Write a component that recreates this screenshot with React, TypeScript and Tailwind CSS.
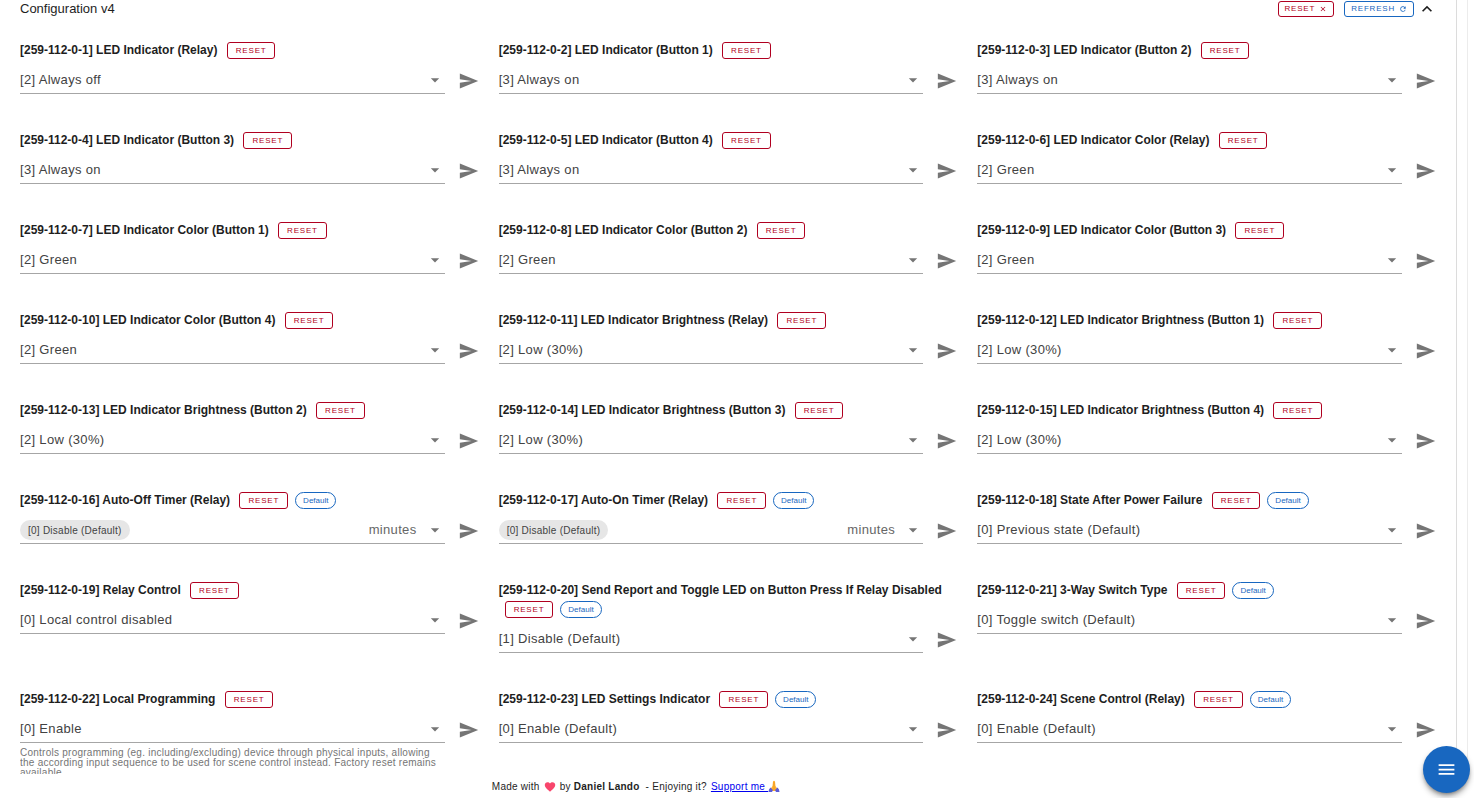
import { useState } from 'react'

interface ConfigValue {
  id: number
  label: string
  value: string
  isDefault?: boolean
  unit?: string
  description?: string
}

const configValues: ConfigValue[] = [
  { id: 1, label: 'LED Indicator (Relay)', value: '[2] Always off' },
  { id: 2, label: 'LED Indicator (Button 1)', value: '[3] Always on' },
  { id: 3, label: 'LED Indicator (Button 2)', value: '[3] Always on' },
  { id: 4, label: 'LED Indicator (Button 3)', value: '[3] Always on' },
  { id: 5, label: 'LED Indicator (Button 4)', value: '[3] Always on' },
  { id: 6, label: 'LED Indicator Color (Relay)', value: '[2] Green' },
  { id: 7, label: 'LED Indicator Color (Button 1)', value: '[2] Green' },
  { id: 8, label: 'LED Indicator Color (Button 2)', value: '[2] Green' },
  { id: 9, label: 'LED Indicator Color (Button 3)', value: '[2] Green' },
  { id: 10, label: 'LED Indicator Color (Button 4)', value: '[2] Green' },
  { id: 11, label: 'LED Indicator Brightness (Relay)', value: '[2] Low (30%)' },
  { id: 12, label: 'LED Indicator Brightness (Button 1)', value: '[2] Low (30%)' },
  { id: 13, label: 'LED Indicator Brightness (Button 2)', value: '[2] Low (30%)' },
  { id: 14, label: 'LED Indicator Brightness (Button 3)', value: '[2] Low (30%)' },
  { id: 15, label: 'LED Indicator Brightness (Button 4)', value: '[2] Low (30%)' },
  { id: 16, label: 'Auto-Off Timer (Relay)', value: '[0] Disable (Default)', isDefault: true, unit: 'minutes' },
  { id: 17, label: 'Auto-On Timer (Relay)', value: '[0] Disable (Default)', isDefault: true, unit: 'minutes' },
  { id: 18, label: 'State After Power Failure', value: '[0] Previous state (Default)', isDefault: true },
  { id: 19, label: 'Relay Control', value: '[0] Local control disabled' },
  {
    id: 20,
    label: 'Send Report and Toggle LED on Button Press If Relay Disabled',
    value: '[1] Disable (Default)',
    isDefault: true,
  },
  { id: 21, label: '3-Way Switch Type', value: '[0] Toggle switch (Default)', isDefault: true },
  {
    id: 22,
    label: 'Local Programming',
    value: '[0] Enable',
    description:
      'Controls programming (eg. including/excluding) device through physical inputs, allowing the according input sequence to be used for scene control instead. Factory reset remains available.',
  },
  { id: 23, label: 'LED Settings Indicator', value: '[0] Enable (Default)', isDefault: true },
  { id: 24, label: 'Scene Control (Relay)', value: '[0] Enable (Default)', isDefault: true },
]

function MenuDown() {
  return (
    <svg viewBox="0 0 24 24" className="pointer-events-none h-5 w-5 shrink-0 fill-[#757575]" aria-hidden="true">
      <path d="M7,10L12,15L17,10H7Z" />
    </svg>
  )
}

function ConfigField({ item }: { item: ConfigValue }) {
  const fieldId = `config-${item.id}`

  return (
    <div className="min-w-0">
      <div className="text-xs leading-[19px] font-bold">
        <label htmlFor={fieldId}>
          [259-112-0-{item.id}] {item.label}
        </label>{' '}
        <button className="ml-[6px] inline-flex h-[17px] items-center rounded-[3px] border border-[#b00020] px-2 align-middle text-[8px] font-normal tracking-widest text-[#b00020]">
          RESET
        </button>
        {item.isDefault && (
          <span className="ml-[7px] inline-flex h-[17px] items-center rounded-full border border-[#1867c0] px-[7px] align-middle text-[8px] font-normal text-[#1867c0]">
            Default
          </span>
        )}
      </div>

      <div className="flex items-center gap-[14px]">
        <div className="flex h-[34px] min-w-0 flex-1 items-center border-b border-[#a6a6a6] pt-[7px]">
          {item.unit ? (
            <>
              <button
                id={fieldId}
                className="h-5 rounded-full bg-[#e6e6e6] px-2 text-[10px] tracking-wide text-[#424242]"
              >
                {item.value}
              </button>
              <select
                aria-label="Unit"
                className="ml-auto appearance-none text-[13px] tracking-wide text-[#666666] outline-none"
              >
                <option>{item.unit}</option>
              </select>
              <span className="ml-2">
                <MenuDown />
              </span>
            </>
          ) : (
            <>
              <select
                id={fieldId}
                className="min-w-0 flex-1 appearance-none text-[13px] tracking-wide text-[#424242] outline-none"
              >
                <option>{item.value}</option>
              </select>
              <MenuDown />
            </>
          )}
        </div>
        <button aria-label="Send" className="pt-[7px]">
          <svg viewBox="0 0 24 24" className="h-5 w-5 fill-[#757575]" aria-hidden="true">
            <path d="M1,21L23,12L1,3V10L15,12L1,14V21Z" />
          </svg>
        </button>
      </div>

      {/* Hint, cut off after the details area */}
      <div className="mt-[5px] mr-[34px] h-[26px] overflow-hidden text-[10px] leading-[10px] tracking-wide text-[#757575]">
        {item.description}
      </div>
    </div>
  )
}

export default function App() {
  const [open, setOpen] = useState(true)

  return (
    <div className="flex min-h-screen flex-col bg-white font-['Liberation_Sans',Arial,sans-serif] text-[#1e1e1e]">
      <div className="mr-[6px] flex flex-1 flex-col border-r border-[#ececec] pr-[10px]">
        <div className="flex flex-1 flex-col border-r border-[#dcdcdc]">
          {/* Panel header */}
          <div className="flex h-[17px] items-center pr-[19px] pl-5">
            <h2 className="text-[13px]">Configuration v4</h2>
            <div className="ml-auto flex items-center gap-[10px]">
              <button className="flex h-4 items-center gap-1 rounded-[3px] border border-[#b00020] px-1.5 text-[8px] tracking-widest text-[#b00020]">
                RESET
                <svg viewBox="0 0 24 24" className="h-2 w-2 fill-current" aria-hidden="true">
                  <path d="M19,6.41L17.59,5L12,10.59L6.41,5L5,6.41L10.59,12L5,17.59L6.41,19L12,13.41L17.59,19L19,17.59L13.41,12L19,6.41Z" />
                </svg>
              </button>
              <button className="flex h-4 items-center gap-1 rounded-[3px] border border-[#1867c0] px-1.5 text-[8px] tracking-widest text-[#1867c0]">
                REFRESH
                <svg viewBox="0 0 24 24" className="h-2 w-2 fill-current" aria-hidden="true">
                  <path d="M17.65,6.35C16.2,4.9 14.21,4 12,4A8,8 0 0,0 4,12A8,8 0 0,0 12,20C15.73,20 18.84,17.45 19.73,14H17.65C16.83,16.33 14.61,18 12,18A6,6 0 0,1 6,12A6,6 0 0,1 12,6C13.66,6 15.14,6.69 16.22,7.78L13,11H20V4L17.65,6.35Z" />
                </svg>
              </button>
            </div>
            <button aria-label="Toggle panel" onClick={() => setOpen(!open)} className="ml-[3px]">
              <svg viewBox="0 0 24 24" className="h-5 w-5 fill-[#1e1e1e]" aria-hidden="true">
                <path d="M7.41,15.41L12,10.83L16.59,15.41L18,14L12,8L6,14L7.41,15.41Z" />
              </svg>
            </button>
          </div>

          {open && (
            <div className="mt-6 grid grid-cols-3 gap-x-5 gap-y-[6px] px-5">
              {configValues.map((item) => (
                <ConfigField key={item.id} item={item} />
              ))}
            </div>
          )}
        </div>
      </div>

      <footer className="flex h-[25px] items-center justify-center pr-[202px] text-[10px] tracking-wide">
        <span>Made with</span>
        <svg viewBox="0 0 24 24" className="mx-1 h-3 w-3" aria-label="love">
          <path
            className="fill-[#f8466c]"
            d="M12,21.5L10.5,20.2C5.4,15.4 1.5,12 1.5,8C1.5,4.8 4,2.5 7,2.5C9,2.5 10.9,3.4 12,5C13.1,3.4 15,2.5 17,2.5C20,2.5 22.5,4.8 22.5,8C22.5,12 18.6,15.4 13.5,20.2L12,21.5Z"
          />
        </svg>
        <span>
          by <strong>Daniel Lando</strong>&nbsp; - Enjoying it?
        </span>
        <a href="#support" className="ml-1 text-[#0000ee] underline">
          Support me&nbsp;
          <svg viewBox="0 0 24 24" className="inline h-3 w-3 align-text-bottom" aria-hidden="true">
            <path className="fill-[#ffb02e]" d="M10,3Q12,0 14,3L15,12L19,18L15,22H9L5,18L9,12Z" />
            <path className="fill-[#5b5bd6]" d="M5,15L10,20L8,24H1L2,19ZM19,15L14,20L16,24H23L22,19Z" />
            <path className="fill-none stroke-[#e08a1e]" d="M12,4V21" />
          </svg>
        </a>
      </footer>

      {/* Floating actions menu */}
      <button
        aria-label="Menu"
        className="fixed right-1 bottom-[5px] flex h-[47px] w-[47px] items-center justify-center rounded-full bg-[#1867c0] shadow-md shadow-black/40"
      >
        <svg viewBox="0 0 24 24" className="h-[21px] w-[21px] fill-white" aria-hidden="true">
          <path d="M3,6H21V8H3V6M3,11H21V13H3V11M3,16H21V18H3V16Z" />
        </svg>
      </button>
    </div>
  )
}
